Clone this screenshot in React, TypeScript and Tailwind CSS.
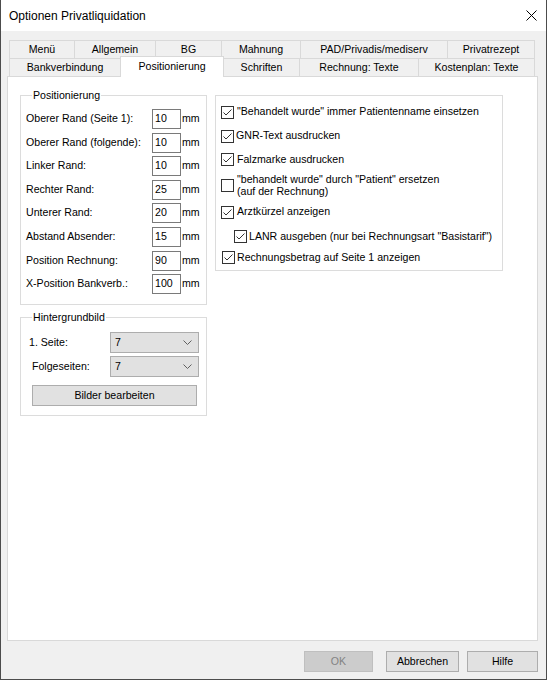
import React from 'react';

const font = "font-['Liberation_Sans',Arial,sans-serif]";

const row1 = [
  { label: 'Menü', w: 'w-[65px]' },
  { label: 'Allgemein', w: 'w-[81px]' },
  { label: 'BG', w: 'w-[66px]' },
  { label: 'Mahnung', w: 'w-[79px]' },
  { label: 'PAD/Privadis/mediserv', w: 'w-[147px]' },
  { label: 'Privatrezept', w: 'w-[88px]' },
];

const fields = [
  { label: 'Oberer Rand (Seite 1):', value: '10' },
  { label: 'Oberer Rand (folgende):', value: '10' },
  { label: 'Linker Rand:', value: '10' },
  { label: 'Rechter Rand:', value: '25' },
  { label: 'Unterer Rand:', value: '20' },
  { label: 'Abstand Absender:', value: '15' },
  { label: 'Position Rechnung:', value: '90' },
  { label: 'X-Position Bankverb.:', value: '100' },
];

function Check({ checked }: { checked: boolean }) {
  return (
    <span className="flex h-[13px] w-[13px] shrink-0 items-center justify-center border border-[#333333] bg-white">
      {checked && (
        <svg width="11" height="11" viewBox="0 0 11 11">
          <path d="M1.5 5.5 L4 8 L9.5 2.5" fill="none" stroke="#333333" strokeWidth="1" />
        </svg>
      )}
    </span>
  );
}

function Select({ value }: { value: string }) {
  return (
    <div className="flex h-[21px] w-[89px] items-center justify-between border border-[#adadad] bg-[#e1e1e1] pl-[4px] pr-[6px]">
      <span>{value}</span>
      <svg width="9" height="5" viewBox="0 0 9 5">
        <path d="M0.5 0.5 L4.5 4.5 L8.5 0.5" fill="none" stroke="#606060" strokeWidth="1" />
      </svg>
    </div>
  );
}

export default function App() {
  return (
    <div className={`flex h-[680px] w-[547px] flex-col border-x border-b border-[#4c4c4c] bg-[#f0f0f0] text-[10.6px] text-black ${font}`}>
      {/* title bar */}
      <div className="flex h-[31px] shrink-0 items-center justify-between bg-white pl-[8px] pr-[9px]">
        <span className="text-[12px]">Optionen Privatliquidation</span>
        <svg width="11" height="11" viewBox="0 0 11 11">
          <path d="M0.5 0.5 L10.5 10.5 M10.5 0.5 L0.5 10.5" stroke="#000" strokeWidth="1" />
        </svg>
      </div>

      <div className="flex flex-col pl-[6px] pt-[9px]">
        {/* tabs */}
        <div className="flex flex-col pl-[2px]">
          <div className="flex h-[18px]">
            {row1.map((t, i) => (
              <div
                key={t.label}
                className={`flex h-[18px] items-center justify-center border-l border-t border-[#d9d9d9] bg-[#f0f0f0] ${t.w} ${i === row1.length - 1 ? 'border-r' : ''}`}
              >
                {t.label}
              </div>
            ))}
          </div>
          <div className="flex h-[18px]">
            <div className="flex h-[18px] w-[111px] items-center justify-center border-l border-t border-[#d9d9d9] bg-[#f0f0f0]">
              Bankverbindung
            </div>
            <div className="relative z-10 -mt-[2px] flex h-[21px] w-[104px] items-start justify-center border-x border-t border-[#d9d9d9] bg-white pt-[2px]">
              Positionierung
            </div>
            <div className="flex h-[18px] w-[75px] items-center justify-center border-t border-[#d9d9d9] bg-[#f0f0f0]">
              Schriften
            </div>
            <div className="flex h-[18px] w-[119px] items-center justify-center border-l border-t border-[#d9d9d9] bg-[#f0f0f0]">
              Rechnung: Texte
            </div>
            <div className="flex h-[18px] w-[117px] items-center justify-center border-x border-t border-[#d9d9d9] bg-[#f0f0f0]">
              Kostenplan: Texte
            </div>
          </div>
        </div>

        {/* panel */}
        <div className="flex h-[565px] w-[531px] items-start gap-[8px] border border-[#d9d9d9] bg-white pl-[12px] pt-[12px]">
          <div className="flex w-[187px] flex-col gap-[6px]">
            <fieldset className="h-[216px] border border-[#dcdcdc] px-[5px] pt-[7px]">
              <legend className="ml-[6px] px-[1px] leading-[13px]">Positionierung</legend>
              <div className="flex flex-col gap-[3.6px]">
                {fields.map((f) => (
                  <div key={f.label} className="flex h-[20px] items-center">
                    <span className="w-[126px]">{f.label}</span>
                    <span className="flex h-[20px] w-[29px] items-center border border-[#7a7a7a] pl-[2px]">{f.value}</span>
                    <span className="pl-[1px]">mm</span>
                  </div>
                ))}
              </div>
            </fieldset>

            <fieldset className="h-[105px] border border-[#dcdcdc] px-[5px] pt-[8px]">
              <legend className="ml-[6px] px-[1px] leading-[13px]">Hintergrundbild</legend>
              <div className="flex flex-col">
                <div className="flex h-[21px] items-center">
                  <span className="w-[84px] pl-[3px]">1. Seite:</span>
                  <Select value="7" />
                </div>
                <div className="mt-[3px] flex h-[21px] items-center">
                  <span className="w-[84px] pl-[6px]">Folgeseiten:</span>
                  <Select value="7" />
                </div>
                <div className="ml-[6px] mt-[8px] flex h-[21px] w-[165px] items-center justify-center border border-[#adadad] bg-[#e1e1e1]">
                  Bilder bearbeiten
                </div>
              </div>
            </fieldset>
          </div>

          <div className="mt-[6px] flex h-[176px] w-[288px] flex-col border border-[#dcdcdc] pl-[5px] pt-[4px]">
            <div className="flex h-[24px] items-center gap-[3px]">
              <Check checked />
              <span>"Behandelt wurde" immer Patientenname einsetzen</span>
            </div>
            <div className="flex h-[24px] items-center gap-[2px]">
              <Check checked />
              <span>GNR-Text ausdrucken</span>
            </div>
            <div className="flex h-[23px] items-center gap-[3px]">
              <Check checked />
              <span>Falzmarke ausdrucken</span>
            </div>
            <div className="flex h-[28px] items-center gap-[3px]">
              <Check checked={false} />
              <span className="leading-[12px]">
                "behandelt wurde" durch "Patient" ersetzen
                <br />
                (auf der Rechnung)
              </span>
            </div>
            <div className="flex h-[26px] items-center gap-[3px]">
              <Check checked />
              <span>Arztkürzel anzeigen</span>
            </div>
            <div className="ml-[13px] flex h-[23px] items-center gap-[2px]">
              <Check checked />
              <span>LANR ausgeben (nur bei Rechnungsart "Basistarif")</span>
            </div>
            <div className="ml-[1px] flex h-[19px] items-center gap-[2px]">
              <Check checked />
              <span>Rechnungsbetrag auf Seite 1 anzeigen</span>
            </div>
          </div>
        </div>
      </div>

      {/* buttons */}
      <div className="mt-[10px] flex h-[21px] pl-[303px]">
        <div className="flex h-[21px] w-[69px] items-center justify-center border border-[#bfbfbf] bg-[#cccccc] text-[#838383]">OK</div>
        <div className="ml-[13px] flex h-[21px] w-[73px] items-center justify-center border border-[#adadad] bg-[#e1e1e1]">Abbrechen</div>
        <div className="ml-[8px] flex h-[21px] w-[71px] items-center justify-center border border-[#adadad] bg-[#e1e1e1]">Hilfe</div>
      </div>
    </div>
  );
}
